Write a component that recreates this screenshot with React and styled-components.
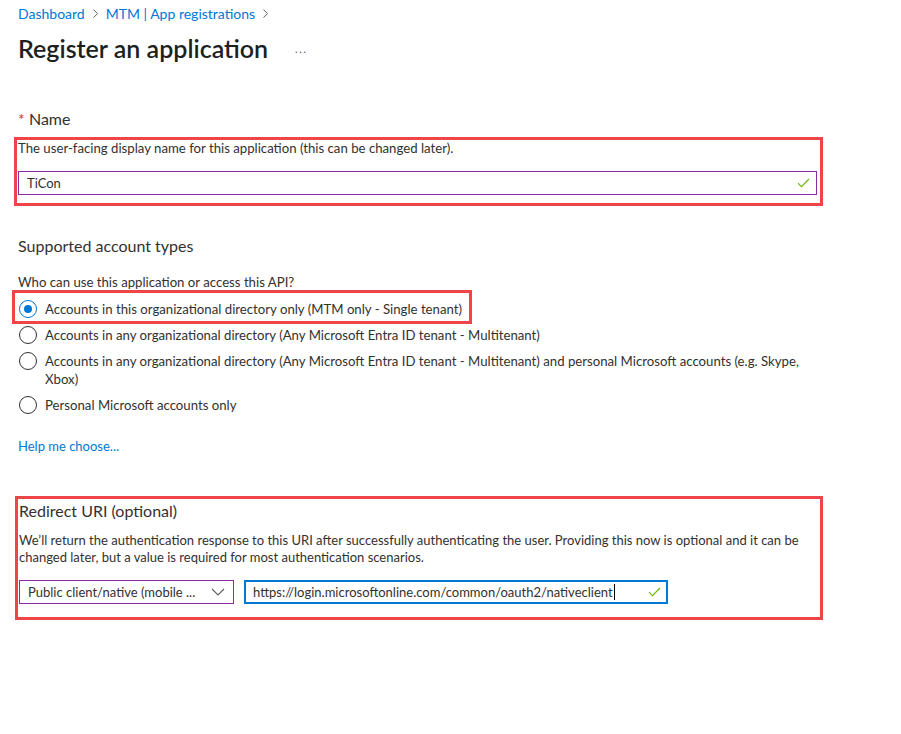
import React from 'react'
import styled, { createGlobalStyle } from 'styled-components'

const GlobalStyle = createGlobalStyle`
  body {
    margin: 0;
    background: #fff;
    font-family: Lato, "Noto Sans", sans-serif;
    color: #323130;
  }
`

const Check = () => (
  <svg width="13" height="10" viewBox="0 0 13 10">
    <path d="M1 5.2 L4.4 8.6 L12 1" fill="none" stroke="#6bb700" strokeWidth="1.1" />
  </svg>
)

const Chevron = ({ size = 7, color = '#605e5c' }) => (
  <svg width={size} height={size * 1.6} viewBox="0 0 7 11">
    <path d="M1.5 1.5 L5.5 5.5 L1.5 9.5" fill="none" stroke={color} strokeWidth="1" />
  </svg>
)

const ChevronDown = () => (
  <svg width="14" height="8" viewBox="0 0 14 8" style={{ flex: 'none' }}>
    <path d="M1 1 L7 7 L13 1" fill="none" stroke="#605e5c" strokeWidth="1.1" />
  </svg>
)

const App = () => {
  return (
    <>
      <GlobalStyle />
      <Page>
        <Crumbs>
          <CrumbLink href="#">Dashboard</CrumbLink>
          <Chevron />
          <CrumbLink href="#">MTM | App registrations</CrumbLink>
          <Chevron />
        </Crumbs>

        <TitleRow>
          <Title>Register an application</Title>
          <More>...</More>
        </TitleRow>

        <FieldLabel $top={45}><Required>*</Required> Name</FieldLabel>
        <RedBox $top={8} $left={-4} $width={809} $pad="0 3px 8px 1px">
          <Hint>The user-facing display name for this application (this can be changed later).</Hint>
          <TextBox $top={15} $width={799}>
            <span>TiCon</span>
            <Check />
          </TextBox>
        </RedBox>

        <FieldLabel $top={30}>Supported account types</FieldLabel>
        <Hint $top={18}>Who can use this application or access this API?</Hint>

        <RadioList>
          <RadioMark>
            <RadioRow>
              <Radio $checked />
              <span>Accounts in this organizational directory only (MTM only - Single tenant)</span>
            </RadioRow>
          </RadioMark>
          <RadioRow>
            <Radio />
            <span>Accounts in any organizational directory (Any Microsoft Entra ID tenant - Multitenant)</span>
          </RadioRow>
          <RadioRow>
            <Radio />
            <span>
              Accounts in any organizational directory (Any Microsoft Entra ID tenant - Multitenant) and personal Microsoft accounts (e.g. Skype,
              <br />Xbox)
            </span>
          </RadioRow>
          <RadioRow>
            <Radio />
            <span>Personal Microsoft accounts only</span>
          </RadioRow>
        </RadioList>

        <HelpLink href="#">Help me choose...</HelpLink>

        <RedBox $top={42} $left={-3} $width={808} $pad="2px 3px 13px 1px">
          <FieldLabel>Redirect URI (optional)</FieldLabel>
          <Paragraph>
            We’ll return the authentication response to this URI after successfully authenticating the user. Providing this now is optional and it can be
            <br />changed later, but a value is required for most authentication scenarios.
          </Paragraph>
          <InputRow>
            <Select>
              <SelectValue>Public client/native (mobile ...</SelectValue>
              <ChevronDown />
            </Select>
            <TextBox $width={424} $focused>
              <span>https://login.microsoftonline.com/common/oauth2/nativeclient<Caret /></span>
              <Check />
            </TextBox>
          </InputRow>
        </RedBox>
      </Page>
    </>
  )
}

export default App

const Page = styled.div`
  display: flex;
  flex-direction: column;
  align-items: flex-start;
  padding: 5px 0 40px 18px;
`

const Crumbs = styled.nav`
  display: flex;
  align-items: center;
  gap: 7px;
  font-size: 14px;
  line-height: 18px;
`

const CrumbLink = styled.a`
  color: #0078d4;
  text-decoration: none;
`

const TitleRow = styled.div`
  display: flex;
  align-items: center;
  margin-top: 9px;
`

const Title = styled.h1`
  margin: 0;
  font-size: 25px;
  line-height: 32px;
  font-weight: 600;
  color: #201f1e;
`

const More = styled.span`
  margin-left: 27px;
  font-size: 11px;
  letter-spacing: 1.5px;
  color: #605e5c;
`

const FieldLabel = styled.div`
  margin-top: ${p => p.$top || 0}px;
  font-size: 16px;
  line-height: 20px;
  color: #323130;
`

const Required = styled.span`
  color: #d13438;
`

const RedBox = styled.div`
  box-sizing: border-box;
  margin-top: ${p => p.$top}px;
  margin-left: ${p => p.$left}px;
  width: ${p => p.$width}px;
  padding: ${p => p.$pad};
  border: 3px solid #f04548;
`

const Hint = styled.div`
  margin-top: ${p => p.$top || 0}px;
  font-size: 13.2px;
  line-height: 16px;
`

const TextBox = styled.div`
  box-sizing: border-box;
  display: flex;
  align-items: center;
  justify-content: space-between;
  margin-top: ${p => p.$top || 0}px;
  width: ${p => p.$width}px;
  height: 24px;
  padding: 0 ${p => (p.$focused ? '5px 0 7px' : '6px 0 8px')};
  border: ${p => (p.$focused ? '2px solid #0078d4' : '1px solid #8a2da5')};
  font-size: 13px;
  color: #323130;
`

const Caret = styled.span`
  display: inline-block;
  width: 1px;
  height: 16px;
  margin-left: 1px;
  vertical-align: -3px;
  background: #000;
`

const RadioList = styled.div`
  display: flex;
  flex-direction: column;
  align-items: flex-start;
  gap: 8px;
  margin-top: 10px;
  padding-left: 1px;
`

const RadioMark = styled.div`
  margin: -10px 0 -6px -7px;
  padding: 7px 7px 3px 4px;
  border: 3px solid #f04548;
`

const RadioRow = styled.label`
  display: flex;
  align-items: flex-start;
  gap: 8px;
  font-size: 13.2px;
  line-height: 18px;
`

const Radio = styled.span`
  box-sizing: border-box;
  flex: none;
  display: flex;
  align-items: center;
  justify-content: center;
  width: 18px;
  height: 18px;
  border-radius: 50%;
  border: 1px solid ${p => (p.$checked ? '#0078d4' : '#323130')};

  &::after {
    content: '';
    display: ${p => (p.$checked ? 'block' : 'none')};
    width: 8px;
    height: 8px;
    border-radius: 50%;
    background: #0078d4;
  }
`

const HelpLink = styled.a`
  margin-top: 24px;
  font-size: 13px;
  line-height: 16px;
  color: #0078d4;
  text-decoration: none;
`

const Paragraph = styled.p`
  margin: 11px 0 0;
  font-size: 13px;
  line-height: 17px;
`

const InputRow = styled.div`
  display: flex;
  gap: 10px;
  margin-top: 14px;
`

const Select = styled.div`
  box-sizing: border-box;
  display: flex;
  align-items: center;
  justify-content: space-between;
  width: 215px;
  height: 24px;
  padding: 0 8px 0 8px;
  border: 1px solid #8a2da5;
  font-size: 13px;
`

const SelectValue = styled.span`
  white-space: nowrap;
`
